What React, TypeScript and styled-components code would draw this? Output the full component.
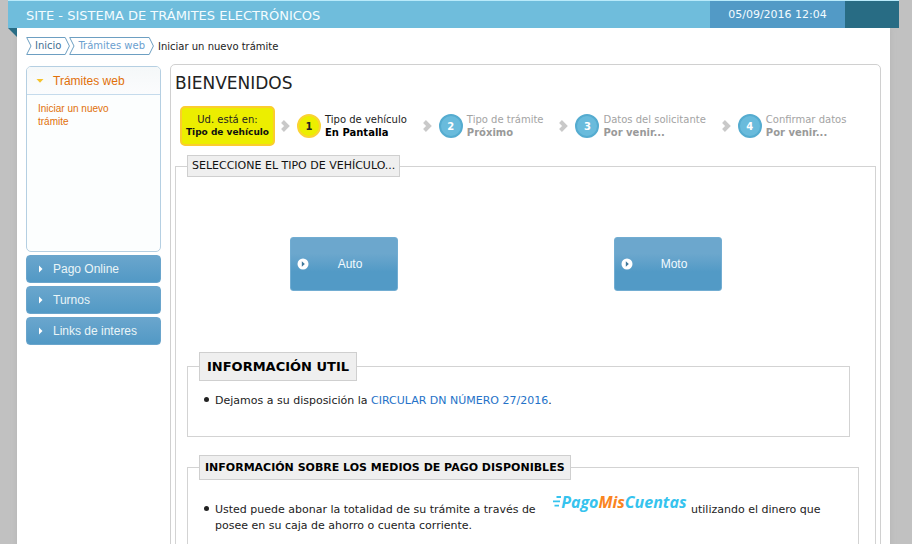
import React from "react";
import styled, { createGlobalStyle, css } from "styled-components";

const GlobalStyle = createGlobalStyle`
  *, *::before, *::after { box-sizing: border-box; }
  body {
    margin: 0;
    background: #c1c1c1;
    color: #222;
    font-family: "DejaVu Sans", Verdana, sans-serif;
    font-size: 11px;
  }
  a { text-decoration: none; }
`;

const Page = styled.div`
  height: 100vh;
  overflow: hidden;
  padding: 0 13px 0 8px;
`;

const Header = styled.header`
  position: relative;
  z-index: 1;
  display: flex;
  height: 28px;
  border-top: 1px solid #b9eafa;
  background: #6fbddc;
  color: #f4fcff;
`;

const SiteTitle = styled.h1`
  flex: 1;
  margin: 0;
  padding-left: 18px;
  font-size: 13px;
  font-weight: 400;
  line-height: 30px;
  white-space: nowrap;
`;

const Clock = styled.time`
  width: 135px;
  background: #529ac6;
  font-size: 11px;
  line-height: 28px;
  text-align: center;
`;

const HeaderEnd = styled.div`
  width: 54px;
  background: #286c84;
`;

const Sheet = styled.div`
  position: relative;
  min-height: 100%;
  margin: 0 9px;
  padding: 9px 9px 0;
  background: #fff;
  box-shadow: 0 0 6px #b4b4b4;
`;

const Fold = styled.svg`
  position: absolute;
  top: 0;
  left: -9px;
`;

const Breadcrumb = styled.nav`
  display: flex;
  align-items: center;
  height: 18px;
  font-size: 10px;
`;

const CrumbLink = styled.a<{ $tone: string }>`
  display: flex;
  height: 18px;
  margin-right: -1px;
  color: ${(p) => p.$tone};
`;

const CrumbText = styled.span`
  padding: 0 3px;
  border: solid #6d9fc2;
  border-width: 1px 0;
  line-height: 16px;
`;

const CrumbCurrent = styled.span`
  padding-left: 5px;
`;

const Columns = styled.div`
  display: flex;
  align-items: flex-start;
  gap: 9px;
  margin-top: 9px;
`;

const Sidebar = styled.aside`
  display: flex;
  flex-direction: column;
  flex: none;
  gap: 3px;
  width: 135px;
  margin-top: 2px;
  font-family: "Liberation Sans", Arial, sans-serif;
`;

const OpenSection = styled.section`
  border: 1px solid #b5cfe2;
  border-radius: 5px;
  background: #fcfefe;
`;

const sectionButton = css`
  display: flex;
  align-items: center;
  gap: 9px;
  width: 100%;
  height: 28px;
  padding: 0 9px;
  font-family: inherit;
  font-size: 12px;
  text-align: left;
`;

const OpenButton = styled.button`
  ${sectionButton}
  border: 0;
  border-bottom: 1px solid #c5dbec;
  border-radius: 4px 4px 0 0;
  background: linear-gradient(#f5f8f9, #fbfcfd);
  color: #e17009;
`;

const ClosedButton = styled.button`
  ${sectionButton}
  border: 1px solid #6aa5cc;
  border-radius: 4px;
  background: linear-gradient(#6aa6cd, #5299c5);
  color: #eaf5f7;
`;

const SectionBody = styled.div`
  min-height: 156px;
  padding: 7px 11px;
  font-size: 10px;
  line-height: 13px;
`;

const SectionLink = styled.a`
  display: block;
  max-width: 80px;
  color: #e17009;
`;

const Main = styled.main`
  flex: 1;
  min-width: 0;
  padding: 0 4px 60px;
  border: 1px solid #d0d0d0;
  border-radius: 5px;
`;

const Welcome = styled.h2`
  margin: 0;
  padding-top: 7px;
  color: #222;
  font-size: 17px;
  font-weight: 400;
  line-height: 22px;
`;

const Steps = styled.ol`
  display: flex;
  align-items: center;
  gap: 16px;
  height: 40px;
  margin: 12px 0 9px;
  padding: 0 0 0 5px;
  list-style: none;
  white-space: nowrap;
`;

const Here = styled.li`
  display: flex;
  flex-direction: column;
  justify-content: center;
  width: 95px;
  height: 40px;
  margin-right: -10px;
  border: 2px solid #fbcd2e;
  border-radius: 5px;
  background: #ecee00;
  color: #222;
  font-size: 10px;
  line-height: 13px;
  text-align: center;

  strong {
    color: #111;
    font-size: 9px;
  }
`;

const Step = styled.li<{ $active?: boolean }>`
  display: flex;
  align-items: center;
  color: ${(p) => (p.$active ? "#222" : "#a3a3a3")};
  font-size: 10px;
  line-height: 13px;

  strong {
    display: block;
    color: ${(p) => (p.$active ? "#000" : "#999")};
  }
`;

const StepNumber = styled.span<{ $active?: boolean }>`
  display: grid;
  place-items: center;
  width: 24px;
  height: 24px;
  margin: 0 4px 0 7px;
  border: 2px solid ${(p) => (p.$active ? "#fbd335" : "#55acd0")};
  border-radius: 50%;
  background: ${(p) => (p.$active ? "#ecee00" : "#69bbdc")};
  color: ${(p) => (p.$active ? "#222" : "#fff")};
  font-weight: 700;
`;

const Group = styled.fieldset`
  min-width: 0;
  margin: 0;
  padding: 0 11px;
  border: 1px solid #d3d3d3;
`;

const GroupLegend = styled.legend`
  padding: 0 4px;
  border: 1px solid #cfcfcf;
  background: #efefef;
  color: #111;
  font-size: 11px;
  line-height: 20px;
`;

const Choices = styled.div`
  display: grid;
  grid-template-columns: 1fr 1fr;
  justify-items: center;
  margin: 0 34px 0 -5px;
  padding: 60px 0 61px;
`;

const ChoiceButton = styled.button`
  display: grid;
  grid-template-columns: 12px 1fr;
  align-items: center;
  width: 108px;
  height: 54px;
  padding: 0 6px;
  border: 1px solid #72add2;
  border-radius: 3px;
  background: linear-gradient(#6ca7cd 30%, #529ac6 65%);
  color: #f1faff;
  font-family: "Liberation Sans", Arial, sans-serif;
  font-size: 12px;
`;

const InfoGroup = styled.fieldset<{ $wide?: boolean }>`
  min-width: 0;
  margin: 0 ${(p) => (p.$wide ? 5 : 14)}px 18px 0;
  padding: 0 11px 27px;
  border: 1px solid #d3d3d3;
`;

const InfoLegend = styled.legend<{ $large?: boolean }>`
  padding: 0 ${(p) => (p.$large ? 7 : 5)}px;
  border: 1px solid #cfcfcf;
  background: #efefef;
  color: #000;
  font-size: ${(p) => (p.$large ? 13 : 11)}px;
  font-weight: 700;
  line-height: ${(p) => (p.$large ? 27 : 23)}px;
`;

const Notes = styled.ul<{ $spaced?: boolean }>`
  margin: 0;
  padding: ${(p) => (p.$spaced ? 10 : 12)}px 0 0 5px;
  line-height: 16px;
  list-style: none;

  a { color: #2472c8; }
`;

const Note = styled.li`
  display: grid;
  grid-template-columns: 5px 1fr;
  align-items: first baseline;
  gap: 6px;
`;

const Dot = () => (
  <svg width="5" height="7" viewBox="0 0 5 7" aria-hidden="true">
    <circle cx="2.5" cy="2.5" r="2.5" fill="#222" />
  </svg>
);

const PayLogo = styled.a`
  display: inline-block;
  margin: 0 1px 0 14px;
  font-family: "Open Sans", sans-serif;
  font-size: 16px;
  font-style: italic;
  font-weight: 700;
  line-height: 24px;
  vertical-align: 5px;

  && { color: #36c3ee; }
  && em { color: #fa8420; }
`;

const CrumbLeft = () => (
  <svg width="6" height="18" viewBox="0 0 6 18" fill="none" stroke="#6d9fc2" aria-hidden="true">
    <path d="M6 .5H.7L5 9 .7 17.5H6" />
  </svg>
);

const CrumbRight = () => (
  <svg width="6" height="18" viewBox="0 0 6 18" fill="none" stroke="#6d9fc2" aria-hidden="true">
    <path d="M0 .5H1.2L5.4 9 1.2 17.5H0" />
  </svg>
);

const Crumb = ({ tone, children }: { tone: string; children: React.ReactNode }) => (
  <CrumbLink href="#" $tone={tone}>
    <CrumbLeft />
    <CrumbText>{children}</CrumbText>
    <CrumbRight />
  </CrumbLink>
);

const Caret = ({ open }: { open?: boolean }) => (
  <svg width="8" height="8" viewBox="0 0 8 8" aria-hidden="true">
    {open ? <path d="M.5 2h7L4 5.8z" fill="#f5c22b" /> : <path d="M3 .5 6.5 4 3 7.5z" fill="#fff" />}
  </svg>
);

const Chevron = () => (
  <svg width="9" height="12" viewBox="0 0 9 12" fill="none" aria-hidden="true">
    <path d="M1.5 1.5 6 6 1.5 10.5" stroke="#c9c9c9" strokeWidth="4" />
  </svg>
);

const PlayDot = () => (
  <svg width="12" height="12" viewBox="0 0 12 12" aria-hidden="true">
    <circle cx="6" cy="6" r="5.5" fill="#fff" />
    <path d="M4.8 3.2 7.8 6 4.8 8.8z" fill="#3f789b" />
  </svg>
);

const SpeedLines = () => (
  <svg width="8" height="13" viewBox="0 0 8 13" stroke="#36c3ee" strokeWidth="1.8" aria-hidden="true">
    <path d="M3.5 2H8M0 6.3H7M1.5 10.6H6" />
  </svg>
);

const steps = [
  { title: "Tipo de vehículo", state: "En Pantalla", active: true },
  { title: "Tipo de trámite", state: "Próximo" },
  { title: "Datos del solicitante", state: "Por venir..." },
  { title: "Confirmar datos", state: "Por venir..." },
];

export default function App() {
  return (
    <Page>
      <GlobalStyle />
      <Header>
        <SiteTitle>SITE - SISTEMA DE TRÁMITES ELECTRÓNICOS</SiteTitle>
        <Clock dateTime="2016-09-05T12:04">05/09/2016 12:04</Clock>
        <HeaderEnd />
      </Header>
      <Sheet>
        <Fold width="9" height="9" viewBox="0 0 9 9" aria-hidden="true">
          <path d="M0 0H9V9z" fill="#286c84" />
        </Fold>
        <Breadcrumb aria-label="Ruta">
          <Crumb tone="#3f6f92">Inicio</Crumb>
          <Crumb tone="#6ba0cf">Trámites web</Crumb>
          <CrumbCurrent>Iniciar un nuevo trámite</CrumbCurrent>
        </Breadcrumb>
        <Columns>
          <Sidebar>
            <OpenSection>
              <OpenButton type="button" aria-expanded="true">
                <Caret open />
                Trámites web
              </OpenButton>
              <SectionBody>
                <SectionLink href="#">Iniciar un nuevo trámite</SectionLink>
              </SectionBody>
            </OpenSection>
            {["Pago Online", "Turnos", "Links de interes"].map((label) => (
              <ClosedButton key={label} type="button" aria-expanded="false">
                <Caret />
                {label}
              </ClosedButton>
            ))}
          </Sidebar>
          <Main>
            <Welcome>BIENVENIDOS</Welcome>
            <Steps>
              <Here>
                <span>Ud. está en:</span>
                <strong>Tipo de vehículo</strong>
              </Here>
              {steps.map((step, i) => (
                <Step key={step.title} $active={step.active}>
                  <Chevron />
                  <StepNumber $active={step.active}>{i + 1}</StepNumber>
                  <span>
                    {step.title}
                    <strong>{step.state}</strong>
                  </span>
                </Step>
              ))}
            </Steps>
            <Group>
              <GroupLegend>SELECCIONE EL TIPO DE VEHÍCULO...</GroupLegend>
              <Choices>
                {["Auto", "Moto"].map((label) => (
                  <ChoiceButton key={label} type="button">
                    <PlayDot />
                    <span>{label}</span>
                  </ChoiceButton>
                ))}
              </Choices>
              <InfoGroup>
                <InfoLegend $large>INFORMACIÓN UTIL</InfoLegend>
                <Notes>
                  <Note>
                    <Dot />
                    <span>
                      Dejamos a su disposición la <a href="#">CIRCULAR DN NÚMERO 27/2016</a>.
                    </span>
                  </Note>
                </Notes>
              </InfoGroup>
              <InfoGroup $wide>
                <InfoLegend>INFORMACIÓN SOBRE LOS MEDIOS DE PAGO DISPONIBLES</InfoLegend>
                <Notes $spaced>
                  <Note>
                    <Dot />
                    <span>
                      Usted puede abonar la totalidad de su trámite a través de{" "}
                      <PayLogo href="#">
                        <SpeedLines />
                        Pago<em>Mis</em>Cuentas
                      </PayLogo>{" "}
                      utilizando el dinero que posee en su caja de ahorro o cuenta corriente.
                    </span>
                  </Note>
                </Notes>
              </InfoGroup>
            </Group>
          </Main>
        </Columns>
      </Sheet>
    </Page>
  );
}
